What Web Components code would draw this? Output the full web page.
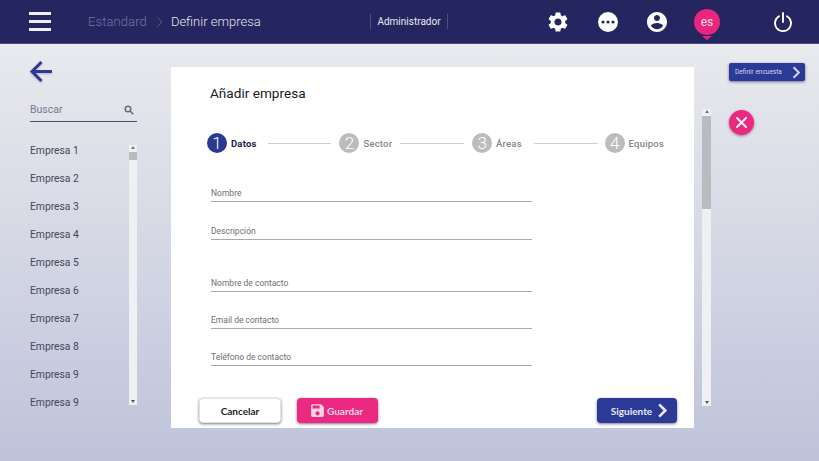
<!DOCTYPE html>
<html lang="es">
<head>
<meta charset="utf-8">
<title>Definir empresa</title>
<style>
  html, body { margin: 0; height: 100%; }
  body { font-family: Roboto, "Liberation Sans", sans-serif; overflow: hidden; }
</style>
</head>
<body>
<app-shell>
  <app-header></app-header>
  <side-panel>
    <list-row>Empresa 1</list-row>
    <list-row>Empresa 2</list-row>
    <list-row>Empresa 3</list-row>
    <list-row>Empresa 4</list-row>
    <list-row>Empresa 5</list-row>
    <list-row>Empresa 6</list-row>
    <list-row>Empresa 7</list-row>
    <list-row>Empresa 8</list-row>
    <list-row>Empresa 9</list-row>
    <list-row>Empresa 9</list-row>
  </side-panel>
  <wizard-card></wizard-card>
  <scroll-track style="--track-h:297px;--thumb-top:7px;--thumb-h:93px;--track-w:9px;margin:65px 0 0 8px"></scroll-track>
  <side-actions></side-actions>
</app-shell>

<script>
// Iconos compartidos
const ICONS = {
  gear: 'M19.14 12.94c.04-.3.06-.61.06-.94 0-.32-.02-.64-.07-.94l2.03-1.58c.18-.14.23-.41.12-.61l-1.92-3.32c-.12-.22-.37-.29-.59-.22l-2.39.96c-.5-.38-1.03-.7-1.62-.94l-.36-2.54c-.04-.24-.24-.41-.48-.41h-3.84c-.24 0-.43.17-.47.41l-.36 2.54c-.59.24-1.13.57-1.62.94l-2.39-.96c-.22-.08-.47 0-.59.22L2.74 8.87c-.12.21-.08.47.12.61l2.03 1.58c-.05.3-.09.63-.09.94s.02.64.07.94l-2.03 1.58c-.18.14-.23.41-.12.61l1.92 3.32c.12.22.37.29.59.22l2.39-.96c.5.38 1.03.7 1.62.94l.36 2.54c.05.24.24.41.48.41h3.84c.24 0 .44-.17.47-.41l.36-2.54c.59-.24 1.13-.56 1.62-.94l2.39.96c.22.08.47 0 .59-.22l1.92-3.32c.12-.22.07-.47-.12-.61l-2.01-1.58zM12 15.6c-1.98 0-3.6-1.62-3.6-3.6s1.62-3.6 3.6-3.6 3.6 1.62 3.6 3.6-1.62 3.6-3.6 3.6z',
  dots: 'M12 2a10 10 0 1 0 0 20 10 10 0 0 0 0-20zM7 10.4a1.6 1.6 0 1 1 0 3.2 1.6 1.6 0 0 1 0-3.2zm5 0a1.6 1.6 0 1 1 0 3.2 1.6 1.6 0 0 1 0-3.2zm5 0a1.6 1.6 0 1 1 0 3.2 1.6 1.6 0 0 1 0-3.2z',
  user: 'M12 2C6.48 2 2 6.48 2 12s4.48 10 10 10 10-4.48 10-10S17.52 2 12 2zm0 3c1.66 0 3 1.34 3 3s-1.34 3-3 3-3-1.34-3-3 1.34-3 3-3zm0 14.2c-2.5 0-4.71-1.28-6-3.22.03-1.99 4-3.08 6-3.08 1.99 0 5.97 1.09 6 3.08-1.29 1.94-3.5 3.22-6 3.22z',
  save: 'M17 3H5c-1.11 0-2 .9-2 2v14c0 1.1.89 2 2 2h14c1.1 0 2-.9 2-2V7l-4-4zm-5 16c-1.66 0-3-1.34-3-3s1.34-3 3-3 3 1.34 3 3-1.34 3-3 3zm3-10H5V5h10v4z'
};
const icon = (name, size) => `<svg width="${size}" height="${size}" viewBox="0 0 24 24" fill="currentColor"><path fill-rule="evenodd" d="${ICONS[name]}"/></svg>`;
const chevron = (w, h, sw) => `<svg width="${w}" height="${h}" viewBox="0 0 10 16" fill="none" stroke="currentColor" stroke-width="${sw}"><path d="M2 1.5 8.5 8 2 14.5"/></svg>`;

// Contenedor general de la página
class AppShell extends HTMLElement {
  constructor() {
    super();
    this.attachShadow({ mode: 'open' });
    this.shadowRoot.innerHTML = `
      <style>
        :host {
          display: grid;
          grid-template-columns: 171px 523px auto 1fr;
          grid-template-rows: 44px 1fr;
          height: 461px;
          width: 819px;
          background: linear-gradient(#e9eaee 44px, #bfc3da 100%);
        }
        ::slotted(app-header) { grid-column: 1 / -1; }
      </style>
      <slot></slot>`;
  }
}

// Barra superior
class AppHeader extends HTMLElement {
  constructor() {
    super();
    this.attachShadow({ mode: 'open' });
    this.shadowRoot.innerHTML = `
      <style>
        :host {
          display: flex;
          align-items: center;
          height: 43px;
          background: #25265f;
          border-bottom: 1px solid #4a4c85;
          color: #fff;
          font-family: Roboto, sans-serif;
        }
        .burger { display: flex; flex-direction: column; gap: 5px; width: 22px; margin: 0 37px 0 29px; }
        .burger i { display: block; height: 3px; background: #eef0f6; }
        .crumbs { display: flex; align-items: center; width: 282px; font-size: 13px; font-weight: 300; }
        .dim { color: #7175a8; letter-spacing: .1px; }
        .sep { color: #7175a8; display: flex; margin: 0 8px 0 9px; }
        .now { color: #e3e4ef; }
        .role { width: 76px; text-align: center; font-size: 10px; line-height: 15px; border-left: 1px solid #4c4e87; border-right: 1px solid #4c4e87; color: #e8e9f2; }
        .tools { display: flex; align-items: center; margin-left: 98px; }
        .tool { display: flex; align-items: center; justify-content: center; width: 24px; }
        .tool + .tool { margin-left: 25.5px; }
        .lang {
          position: relative;
          width: 26px; height: 26px; border-radius: 50%;
          background: #e8267d; display: flex; align-items: center; justify-content: center;
          font-size: 12px; margin-left: 25px; color: #fbdcea;
        }
        .lang::after {
          content: ""; position: absolute; left: 8px; top: 27px;
          border: 5px solid transparent; border-top: 4px solid #e8267d; border-bottom: 0;
        }
        .power { margin-left: 53px; display: flex; }
      </style>
      <div class="burger"><i></i><i></i><i></i></div>
      <div class="crumbs">
        <span class="dim">Estandard</span>
        <span class="sep">${chevron(7, 12, 1)}</span>
        <span class="now">Definir empresa</span>
      </div>
      <div class="role">Administrador</div>
      <div class="tools">
        <span class="tool">${icon('gear', 24)}</span>
        <span class="tool">${icon('dots', 24)}</span>
        <span class="tool">${icon('user', 24)}</span>
        <span class="lang">es</span>
        <span class="power">
          <svg width="20" height="20" viewBox="0 0 20 20" fill="none" stroke="#fff" stroke-width="1.9" stroke-linecap="round">
            <path d="M6 4.2a8 8 0 1 0 8 0"/><path d="M10 1v9"/>
          </svg>
        </span>
      </div>`;
  }
}

// Panel lateral con buscador y lista
class SidePanel extends HTMLElement {
  constructor() {
    super();
    this.attachShadow({ mode: 'open' });
    this.shadowRoot.innerHTML = `
      <style>
        :host { display: block; padding: 15px 0 0 29px; font-family: Roboto, sans-serif; }
        .back { display: block; height: 26px; color: #2e3a90; filter: drop-shadow(0 1px 1px rgba(40,40,90,.3)); }
        .search {
          display: flex; justify-content: space-between; align-items: center;
          box-sizing: border-box; width: 107px; height: 21px; margin: 16px 0 0 1px; padding: 0 3px 3px 0;
          border-bottom: 1px solid #4a4d66; font-size: 10.5px; color: #777a8c;
        }
        .wrap { position: relative; margin: 14px 0 0 1px; width: 107px; height: 262px; }
        .rows { display: flex; flex-direction: column; }
        scroll-track { position: absolute; right: 0; top: 9px; }
      </style>
      <svg class="back" width="24" height="24" viewBox="0 0 24 24" fill="none" stroke="currentColor" stroke-width="3"><path d="M23 11.5H3M12.5 2 3 11.5l9.5 9.5"/></svg>
      <div class="search">
        <span>Buscar</span>
        <svg width="10" height="10" viewBox="0 0 10 10" fill="none" stroke="#666a80" stroke-width="1.5"><circle cx="4" cy="4" r="2.8"/><path d="M6 6l3.3 3.3"/></svg>
      </div>
      <div class="wrap">
        <div class="rows"><slot></slot></div>
        <scroll-track style="--track-h:260px;--thumb-top:7px;--thumb-h:8px;--track-w:8px"></scroll-track>
      </div>`;
  }
}

// Fila de la lista lateral
class ListRow extends HTMLElement {
  constructor() {
    super();
    this.attachShadow({ mode: 'open' });
    this.shadowRoot.innerHTML = `
      <style>
        :host { display: flex; align-items: center; height: 28px; font-size: 10.3px; color: #45475a; }
      </style>
      <slot></slot>`;
  }
}

// Barra de desplazamiento dibujada
class ScrollTrack extends HTMLElement {
  constructor() {
    super();
    this.attachShadow({ mode: 'open' });
    this.shadowRoot.innerHTML = `
      <style>
        :host { display: block; position: relative; box-sizing: border-box; width: var(--track-w); height: var(--track-h); background: #eef0f2; }
        .thumb { position: absolute; left: 0; right: 0; top: var(--thumb-top); height: var(--thumb-h); background: #b9bbc0; }
        .arrow { position: absolute; left: 50%; margin-left: -2px; border: 2px solid transparent; }
        .up { top: 1px; border-bottom: 3px solid #777; border-top: 0; }
        .down { bottom: 2px; border-top: 3px solid #555; border-bottom: 0; }
      </style>
      <span class="arrow up"></span><div class="thumb"></div><span class="arrow down"></span>`;
  }
}

// Paso del asistente
class WizardStep extends HTMLElement {
  constructor() {
    super();
    this.attachShadow({ mode: 'open' });
    const active = this.hasAttribute('active');
    this.shadowRoot.innerHTML = `
      <style>
        :host { display: flex; align-items: center; gap: 4px; flex: none; font-size: 9.5px; letter-spacing: .2px; color: ${active ? '#23243f' : '#85868c'}; font-weight: ${active ? 700 : 500}; }
        .num {
          width: 20px; height: 20px; border-radius: 50%;
          background: ${active ? '#2a3a92' : '#bcbcbc'};
          color: #fff; display: flex; align-items: center; justify-content: center;
          font-size: 17px; font-weight: 300; letter-spacing: 0;
        }
      </style>
      <span class="num">${this.getAttribute('n')}</span><slot></slot>`;
  }
}

// Campo de formulario
class FormField extends HTMLElement {
  constructor() {
    super();
    this.attachShadow({ mode: 'open' });
    this.shadowRoot.innerHTML = `
      <style>
        :host { display: flex; align-items: flex-end; box-sizing: border-box; width: 321px; padding: 0 0 3px 0; border-bottom: 1px solid #a9a9ad; font-size: 8.5px; color: #6d6e76; }
      </style>
      <slot></slot>`;
  }
}

// Botón de acción
class ActionButton extends HTMLElement {
  constructor() {
    super();
    this.attachShadow({ mode: 'open' });
    this.shadowRoot.innerHTML = `
      <style>
        :host {
          display: inline-flex; align-items: center; justify-content: center; gap: 5px;
          box-sizing: border-box; height: 25px; border-radius: 4px;
          font-family: Lato, Roboto, sans-serif; font-size: 10px; font-weight: 700;
          box-shadow: 0 1px 3px rgba(30,30,60,.6);
        }
        :host([kind="plain"]) { background: #fff; color: #1d1d2a; width: 82px; border: 1px solid #e2e2e6; }
        :host([kind="pink"]) { background: #ec2980; color: #fbd4e5; width: 81px; gap: 1px; padding-right: 3px; }
        :host([kind="blue"]) { background: #2b3a96; color: #e8eaf8; width: 80px; padding-left: 4px; }
        :host([kind="small"]) { background: #2b3a96; color: #cfd3ee; width: 76px; height: 18px; border-radius: 2px; font-family: Roboto, sans-serif; font-size: 6.5px; font-weight: 400; gap: 10px; padding-left: 1px; }
        ::slotted(svg) { flex: none; }
      </style>
      <slot></slot>`;
  }
}

// Tarjeta principal con el asistente
class WizardCard extends HTMLElement {
  constructor() {
    super();
    this.attachShadow({ mode: 'open' });
    this.shadowRoot.innerHTML = `
      <style>
        :host {
          display: flex; flex-direction: column; box-sizing: border-box;
          height: 361px; margin-top: 23px; padding: 0 30px 5px 36px;
          background: #fff; font-family: Roboto, sans-serif;
        }
        h1 { margin: 17px 0 0 3px; font-size: 13.6px; line-height: 18px; font-weight: 400; color: #1a1a22; }
        .steps { display: flex; align-items: center; margin-top: 31px; height: 20px; }
        .line { flex: 1; height: 1px; background: #cfcfd2; }
        .l1 { margin: 0 8px 0 11px; }
        .l2 { margin: 0 8px; }
        .l3 { margin: 0 7px 0 12px; }
        .form { margin: 0 0 0 4px; }
        form-field { height: 20px; }
        .f1 { margin-top: 29px; }
        .f2 { margin-top: 18px; }
        .f3 { margin-top: 32px; }
        .f4, .f5 { margin-top: 17px; }
        .foot { display: flex; margin-top: auto; }
        .foot .pink { margin-left: 16px; }
        .foot .blue { margin-left: auto; margin-right: -13px; }
      </style>
      <h1>Añadir empresa</h1>
      <div class="steps">
        <wizard-step n="1" active>Datos</wizard-step><span class="line l1"></span>
        <wizard-step n="2">Sector</wizard-step><span class="line l2"></span>
        <wizard-step n="3">Áreas</wizard-step><span class="line l3"></span>
        <wizard-step n="4">Equipos</wizard-step>
      </div>
      <div class="form">
        <form-field class="f1">Nombre</form-field>
        <form-field class="f2">Descripción</form-field>
        <form-field class="f3">Nombre de contacto</form-field>
        <form-field class="f4">Email de contacto</form-field>
        <form-field class="f5">Teléfono de contacto</form-field>
      </div>
      <div class="foot">
        <action-button kind="plain" style="margin-left:-8px">Cancelar</action-button>
        <action-button kind="pink" class="pink">${icon('save', 17)}Guardar</action-button>
        <action-button kind="blue" class="blue">Siguiente ${chevron(10, 15, 2.8)}</action-button>
      </div>`;
  }
}

// Columna derecha con botón y cierre
class SideActions extends HTMLElement {
  constructor() {
    super();
    this.attachShadow({ mode: 'open' });
    this.shadowRoot.innerHTML = `
      <style>
        :host { display: flex; flex-direction: column; align-items: flex-start; padding: 19px 0 0 18px; }
        .close {
          display: flex; align-items: center; justify-content: center;
          width: 25px; height: 25px; margin-top: 29px; border-radius: 50%;
          background: #ec2980; box-shadow: 0 1px 3px rgba(60,30,60,.5);
        }
      </style>
      <action-button kind="small">Definir encuesta ${chevron(8, 13, 2.6)}</action-button>
      <span class="close">
        <svg width="11" height="11" viewBox="0 0 11 11" fill="none" stroke="#fff" stroke-width="1.8" stroke-linecap="round"><path d="M1 1l9 9M10 1l-9 9"/></svg>
      </span>`;
  }
}

customElements.define('app-shell', AppShell);
customElements.define('app-header', AppHeader);
customElements.define('side-panel', SidePanel);
customElements.define('list-row', ListRow);
customElements.define('scroll-track', ScrollTrack);
customElements.define('wizard-step', WizardStep);
customElements.define('form-field', FormField);
customElements.define('action-button', ActionButton);
customElements.define('wizard-card', WizardCard);
customElements.define('side-actions', SideActions);
</script>
</body>
</html>
